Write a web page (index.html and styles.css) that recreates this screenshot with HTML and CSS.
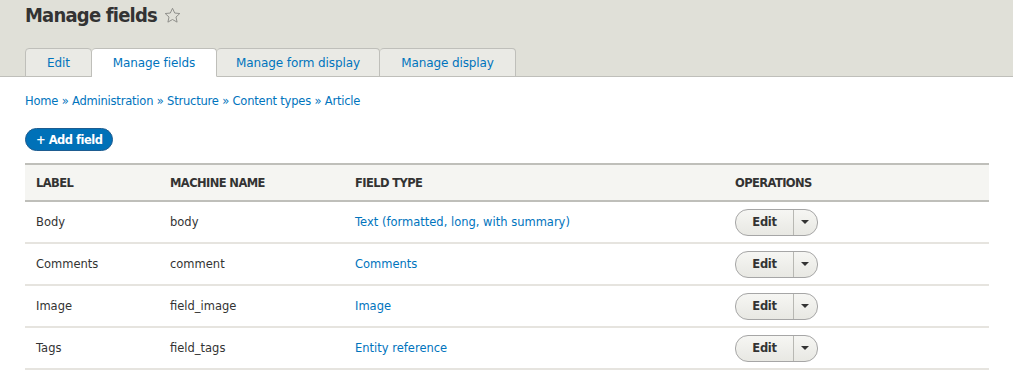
FILE: index.html
```html
<!DOCTYPE html>
<html lang="en">
<head>
  <meta charset="UTF-8">
  <title>Manage fields</title>
  <link rel="stylesheet" href="styles.css">
</head>
<body>
  <!-- Page header with tabs -->
  <div class="page-header">
    <h1 class="page-title">Manage fields
      <svg class="star" width="17" height="17" viewBox="0 0 20 20"><path d="M10 1.5l2.6 5.6 6 .6-4.5 4.1 1.3 6-5.4-3.1-5.4 3.1 1.3-6L1.4 7.7l6-.6z" fill="none" stroke="#8a8a86" stroke-width="1.1" stroke-linejoin="round"/></svg>
    </h1>
    <ul class="tabs">
      <li><a href="#">Edit</a></li>
      <li class="active"><a href="#">Manage fields</a></li>
      <li><a href="#">Manage form display</a></li>
      <li><a href="#">Manage display</a></li>
    </ul>
  </div>

  <div class="content">
    <nav class="breadcrumb">
      <a href="#">Home</a> » <a href="#">Administration</a> » <a href="#">Structure</a> » <a href="#">Content types</a> » <a href="#">Article</a>
    </nav>

    <a href="#" class="button-add">+ Add field</a>

    <table class="fields">
      <thead>
        <tr>
          <th class="col-label">Label</th>
          <th class="col-machine">Machine name</th>
          <th class="col-type">Field type</th>
          <th>Operations</th>
        </tr>
      </thead>
      <tbody>
        <tr>
          <td>Body</td>
          <td>body</td>
          <td><a href="#">Text (formatted, long, with summary)</a></td>
          <td><div class="dropbutton"><span class="drop-main">Edit</span><span class="drop-toggle"></span></div></td>
        </tr>
        <tr>
          <td>Comments</td>
          <td>comment</td>
          <td><a href="#">Comments</a></td>
          <td><div class="dropbutton"><span class="drop-main">Edit</span><span class="drop-toggle"></span></div></td>
        </tr>
        <tr>
          <td>Image</td>
          <td>field_image</td>
          <td><a href="#">Image</a></td>
          <td><div class="dropbutton"><span class="drop-main">Edit</span><span class="drop-toggle"></span></div></td>
        </tr>
        <tr>
          <td>Tags</td>
          <td>field_tags</td>
          <td><a href="#">Entity reference</a></td>
          <td><div class="dropbutton"><span class="drop-main">Edit</span><span class="drop-toggle"></span></div></td>
        </tr>
      </tbody>
    </table>
  </div>
</body>
</html>
```

FILE: styles.css
```css
body {
  margin: 0;
  font-family: "DejaVu Sans", Verdana, sans-serif;
  font-size: 12px;
  color: #333;
  background: #fff;
}

a {
  color: #0074bd;
  text-decoration: none;
}

.page-header {
  background: #e0e0d8;
  padding: 0 25px;
  border-bottom: 1px solid #bfbfba;
  height: 77px;
  box-sizing: border-box;
  display: flex;
  flex-direction: column;
  justify-content: space-between;
}

.page-title {
  margin: 0;
  padding-top: 3px;
  font-family: "DejaVu Sans Condensed", "DejaVu Sans", sans-serif;
  font-size: 20px;
  font-weight: bold;
  color: #333;
  display: flex;
  align-items: center;
  gap: 7px;
  letter-spacing: -0.8px;
}

.star {
  margin-top: 1px;
}

.tabs {
  list-style: none;
  margin: 0 0 -1px;
  padding: 0;
  display: flex;
}

.tabs li {
  background: #eaeae5;
  border: 1px solid #bfbfba;
  border-left: none;
  border-radius: 4px 4px 0 0;
  height: 28px;
  display: flex;
  align-items: center;
  justify-content: center;
  padding-top: 1px;
  box-sizing: border-box;
  height: 29px;
}

.tabs li:first-child {
  border-left: 1px solid #bfbfba;
}

.tabs li a {
  padding: 0 10px;
  letter-spacing: -0.1px;
}

.tabs li:nth-child(1) { width: 67px; }
.tabs li:nth-child(2) { width: 125px; }
.tabs li:nth-child(3) { width: 163px; }
.tabs li:nth-child(4) { width: 136px; }

.tabs li.active {
  background: #fff;
  border-bottom-color: #fff;
}

.content {
  padding: 0 24px 0 25px;
}

.breadcrumb {
  padding-top: 17px;
  font-size: 11.5px;
  letter-spacing: -0.2px;
  color: #0074bd;
}

.button-add {
  display: inline-block;
  margin-top: 20px;
  background: #0071b8;
  color: #fff;
  font-weight: bold;
  font-size: 11.5px;
  padding: 0 10px;
  height: 23px;
  line-height: 22px;
  border-radius: 12px;
  border: 1px solid #1e5c90;
  box-sizing: border-box;
  letter-spacing: -0.5px;
}

.fields {
  width: 100%;
  margin-top: 12px;
  border-collapse: collapse;
}

.fields th {
  background: #f5f5f2;
  border-top: 2px solid #bfbfba;
  border-bottom: 2px solid #bfbfba;
  text-align: left;
  text-transform: uppercase;
  font-size: 11.5px;
  font-weight: bold;
  padding: 0 11px;
  height: 35px;
  letter-spacing: -0.6px;
}

.fields td {
  border-bottom: 2px solid #e6e4df;
  padding: 0 11px;
  height: 40px;
  font-size: 11.5px;
}

.col-label { width: 112px; }
.col-machine { width: 163px; }
.col-type { width: 358px; }

.dropbutton {
  display: inline-flex;
  height: 25px;
  border: 1px solid #a6a6a6;
  border-radius: 13px;
  background: linear-gradient(#f6f6f3, #e8e8e3);
  overflow: hidden;
}

.drop-main {
  width: 57px;
  display: flex;
  align-items: center;
  justify-content: center;
  font-weight: bold;
  color: #333;
  letter-spacing: -0.3px;
  border-right: 1px solid #b8b8b3;
}

.drop-toggle {
  width: 23px;
  display: flex;
  align-items: center;
  justify-content: center;
}

.drop-toggle::after {
  content: "";
  border-left: 4px solid transparent;
  border-right: 4px solid transparent;
  border-top: 4px solid #333;
  margin-left: -2px;
}
```
